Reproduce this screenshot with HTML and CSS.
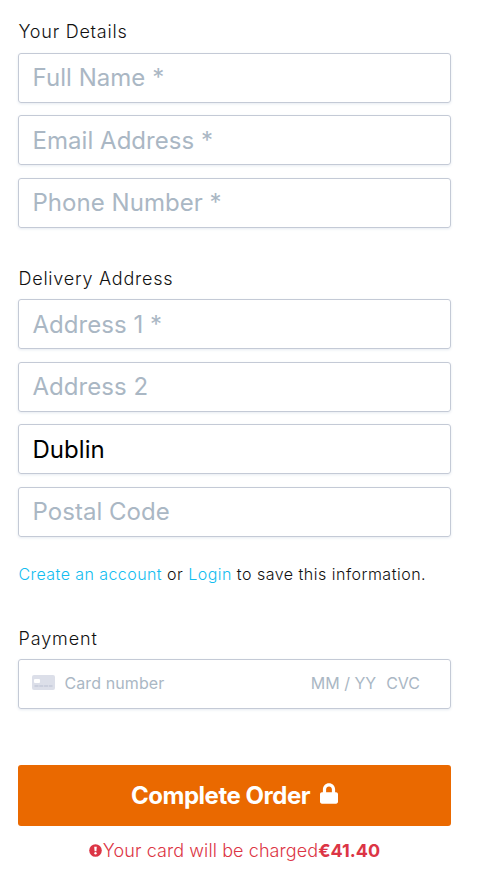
FILE: index.html
```html
<!DOCTYPE html>
<html lang="en">
<head>
<meta charset="utf-8">
<title>Checkout</title>
<link rel="stylesheet" href="styles.css">
</head>
<body>
<form class="checkout">
  <h2 class="heading">Your Details</h2>
  <div class="fields details">
    <div class="field">Full Name *</div>
    <div class="field low">Email Address *</div>
    <div class="field">Phone Number *</div>
  </div>
  <h2 class="heading delivery">Delivery Address</h2>
  <div class="fields">
    <div class="field low">Address 1 *</div>
    <div class="field">Address 2</div>
    <div class="field low filled">Dublin</div>
    <div class="field">Postal Code</div>
  </div>
  <p class="account"><a>Create an account</a> or <a>Login</a> to save this information.</p>
  <h2 class="heading payment">Payment</h2>
  <div class="field card">
    <svg class="card-icon" width="23" height="15" viewBox="0 0 23 15"><rect width="23" height="15" rx="2" fill="#dcdfe9"/><rect x="2" y="4" width="6" height="4" rx="1" fill="#fff"/><path d="M2.500 11h18" stroke="#b9bfd1" stroke-dasharray="4 .8"/></svg>
    <span class="number">Card number</span><span class="expiry">MM / YY</span><span>CVC</span>
  </div>
  <button type="button" class="order"><span>Complete Order</span>
    <svg class="lock" width="18" height="21" viewBox="0 0 448 512"><path fill="#fff" d="M400 224h-24v-72C376 68.200 307.800 0 224 0S72 68.200 72 152v72H48c-26.500 0-48 21.500-48 48v192c0 26.500 21.500 48 48 48h352c26.500 0 48-21.500 48-48V272c0-26.500-21.500-48-48-48zm-104 0H152v-72c0-39.700 32.300-72 72-72s72 32.300 72 72v72z"/></svg>
  </button>
  <p class="charge"><svg width="13" height="13" viewBox="0 0 13 13"><circle cx="6.500" cy="6.500" r="6.300" fill="#dc3545"/><path d="M5.200 2.700h2.600l-.4 4.600H5.600z" fill="#fff"/><circle cx="6.500" cy="9.200" r="1.200" fill="#fff"/></svg><span>Your card will be charged</span><b>€41.40</b></p>
</form>
</body>
</html>
```
FILE: styles.css
```css
* { box-sizing: border-box; }
body { margin: 0; background: #fff; color: #111; font-family: Inter, sans-serif; }
.checkout { width: 433px; margin-left: 18px; padding-top: 18px; }
.heading { margin: 0 0 8px .5px; font-size: 18px; line-height: 27px; font-weight: 300; letter-spacing: .76px; }
.delivery { margin-top: 37px; margin-bottom: 7px; }
.payment { margin-bottom: 7px; letter-spacing: .9px; }
.fields { display: grid; gap: 12.500px; }
.details { row-gap: 12.400px; padding-bottom: .35px; }
.field { height: 50px; padding: 0 13.500px; border: 1px solid #c4cad6; border-radius: 3px; box-shadow: 0 1px 3px #e6ebf1; color: #aab7c4; font-size: 24px; line-height: 48px; letter-spacing: .04px; }
.low { line-height: 49px; }
.filled { color: #000; }
.account { margin: 25px 0 39px .5px; font-size: 16px; line-height: 24px; font-weight: 300; letter-spacing: .5px; }
.account a { color: #12bdf0; letter-spacing: .43px; }
.card { display: flex; align-items: center; padding: 0 30px 0 13px; font-size: 16px; line-height: 47px; letter-spacing: 0; }
.card-icon { margin-right: 9.500px; position: relative; top: -1px; }
.number { flex: 1; letter-spacing: .1px; }
.expiry { margin-right: 10px; }
.order { display: flex; align-items: center; justify-content: center; gap: 10px; width: 100%; height: 61px; margin-top: 56px; padding: 0; border: 0; border-radius: 3px; background: #ea6900; color: #fff; font: 700 24px Inter, sans-serif; letter-spacing: -.48px; }
.lock { position: relative; top: -2px; }
.charge { display: flex; align-items: center; justify-content: center; margin: 11px 0 0; color: #dc3545; font-size: 18px; line-height: 27px; font-weight: 300; letter-spacing: .09px; }
.charge svg { margin-right: 1px; }
.charge b { font-weight: 700; letter-spacing: 0; }
```
